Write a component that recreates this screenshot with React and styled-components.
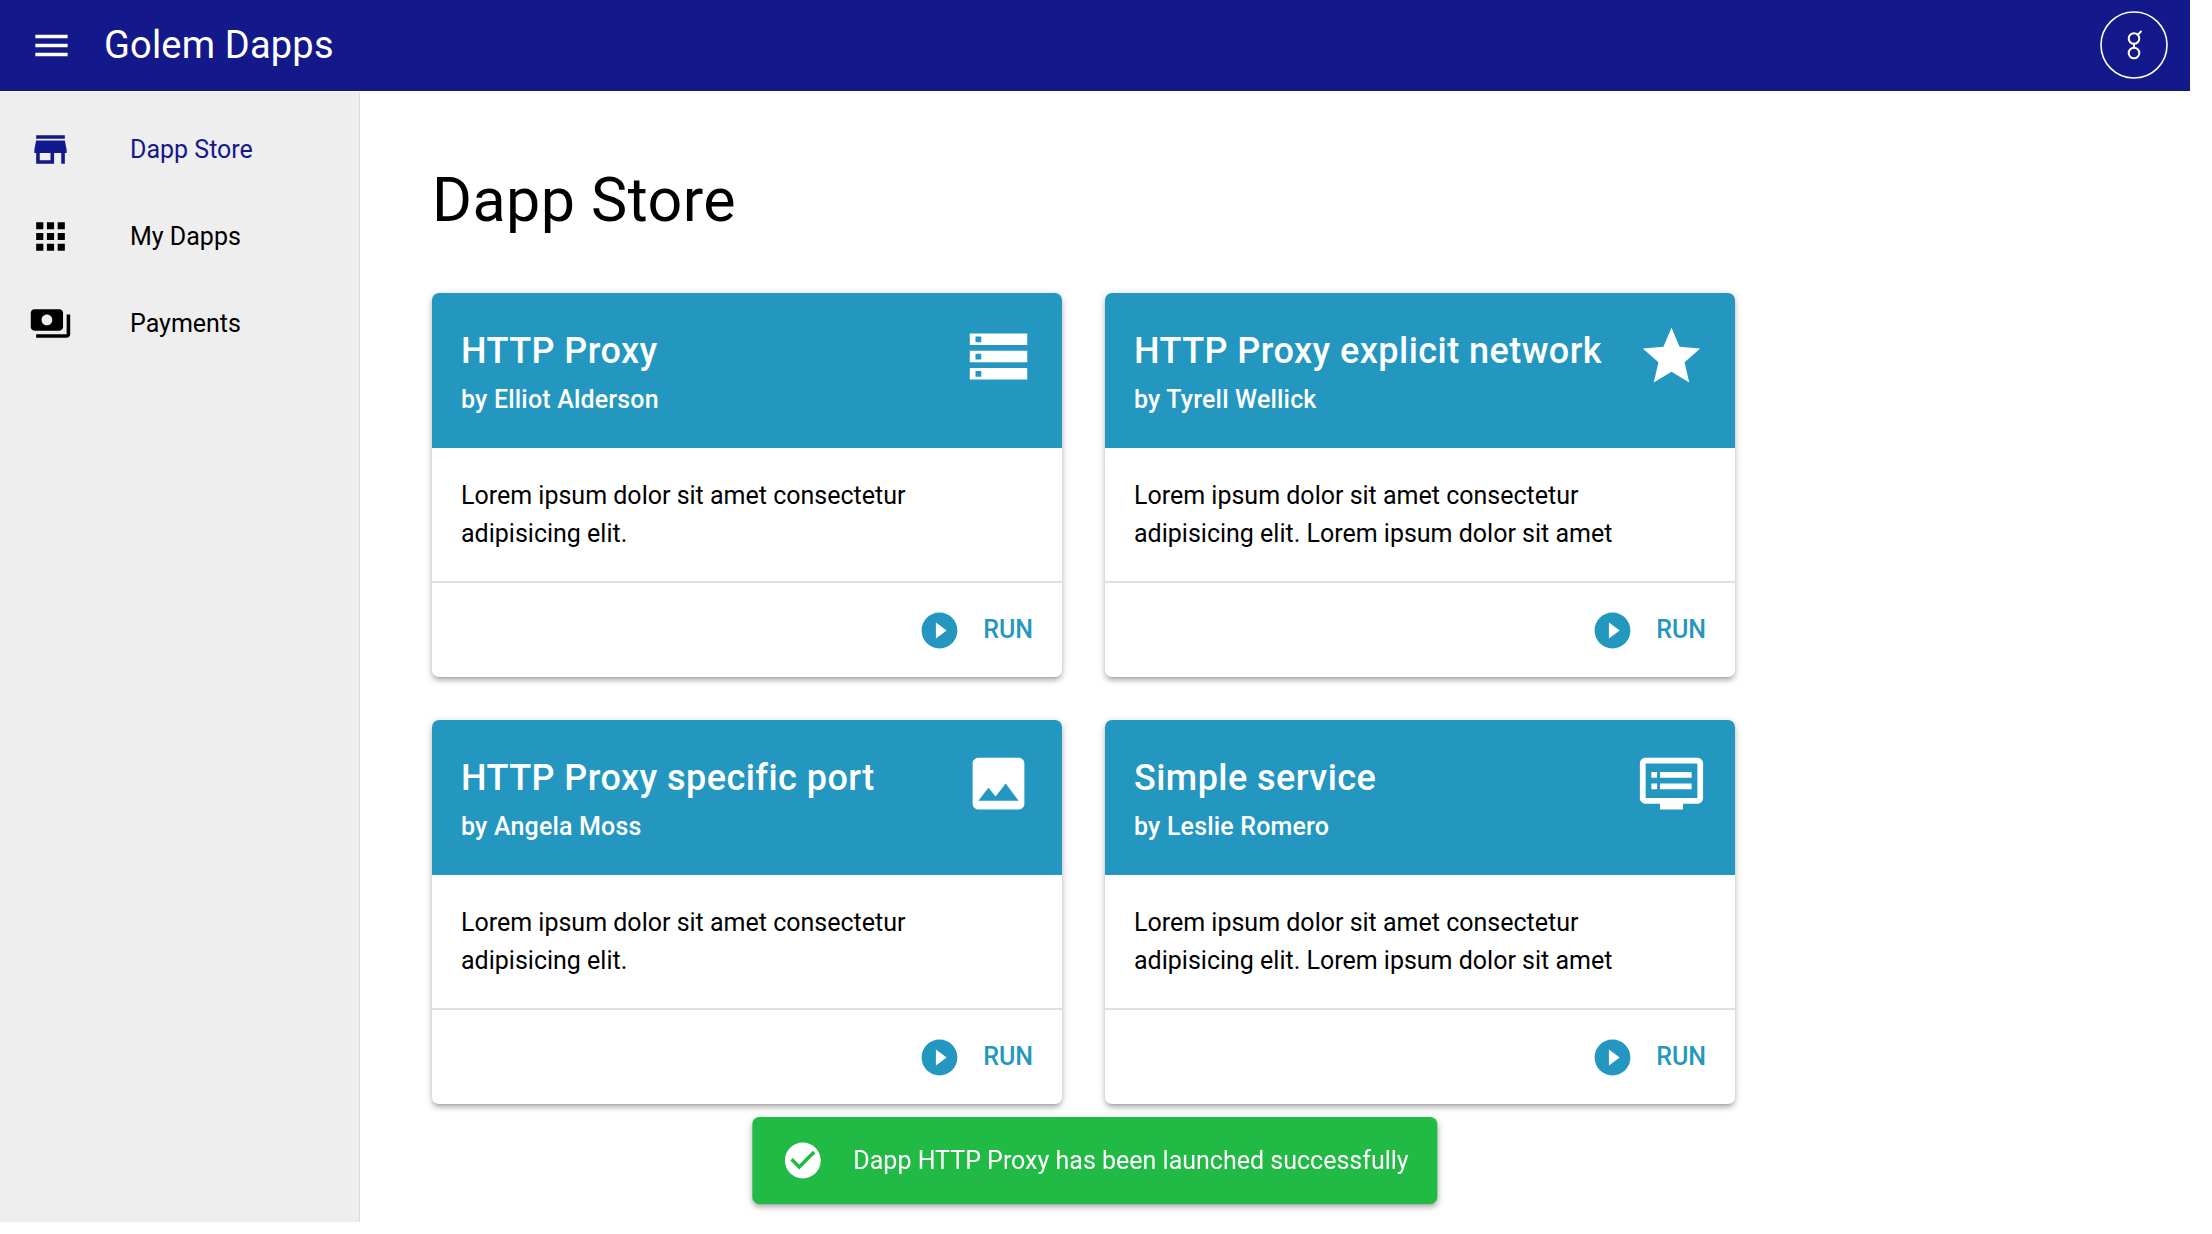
import React, { useState } from "react";
import styled, { createGlobalStyle } from "styled-components";
import {
  MdMenu,
  MdStore,
  MdApps,
  MdPayments,
  MdStorage,
  MdStar,
  MdPhoto,
  MdDvr,
  MdPlayCircleFilled,
  MdCheckCircle,
} from "react-icons/md";

const GlobalStyle = createGlobalStyle`
  *, *::before, *::after { box-sizing: border-box; }
  body {
    margin: 0;
    background: #fff;
    color: #000;
    font-family: Roboto, "Liberation Sans", sans-serif;
    font-size: 25px;
    line-height: 38px;
  }
  h1, h2, p, ul { margin: 0; padding: 0; }
  button { font: inherit; border: 0; background: none; padding: 0; cursor: pointer; }
`;

const Page = styled.div`
  display: flex;
  flex-direction: column;
  min-height: 100vh;
  padding: 0 22px 12px 0;
`;

const Header = styled.header`
  display: flex;
  align-items: center;
  gap: 31px;
  height: 91px;
  padding: 0 22px 0 30px;
  margin-bottom: 1px;
  background: #13188b;
  border-bottom: 1px solid #11157a;
  color: #fff;
`;

const IconButton = styled.button`
  display: flex;
  color: inherit;
  font-size: 43px;
`;

const Brand = styled.div`
  flex: 1;
  font-size: 38px;
  letter-spacing: 0.005em;
`;

const Avatar = styled.button`
  display: flex;
  color: inherit;
`;

const Body = styled.div`
  display: flex;
  flex: 1;
`;

const Sidebar = styled.nav`
  flex: 0 0 360px;
  padding-top: 14px;
  background: #eee;
  border-right: 1px solid #dcdcdc;
`;

const NavList = styled.ul`
  list-style: none;
`;

const NavLink = styled.a`
  display: flex;
  align-items: center;
  gap: 58px;
  height: 87px;
  padding: 0 29px;
  color: ${({ $active }) => ($active ? "#13188b" : "#000")};
  text-decoration: none;

  svg { font-size: 43px; }
`;

const Main = styled.main`
  flex: 1;
  padding: 72px 72px 108px;
`;

const PageTitle = styled.h1`
  margin-bottom: 57px;
  font-size: 61px;
  font-weight: 400;
  line-height: 72px;
  letter-spacing: 0.00735em;
`;

const CardGrid = styled.div`
  display: grid;
  grid-template-columns: repeat(auto-fill, 630px);
  gap: 43px;
`;

const Card = styled.article`
  border-radius: 7px;
  background: #fff;
  overflow: hidden;
  box-shadow:
    0 2px 9px rgba(0, 0, 0, 0.2),
    0 4px 4px rgba(0, 0, 0, 0.14),
    0 5px 2px -4px rgba(0, 0, 0, 0.12);
`;

const CardHeader = styled.div`
  display: flex;
  justify-content: space-between;
  align-items: flex-start;
  padding: 29px;
  background: #2397bf;
  color: #fff;

  svg { font-size: 69px; }
`;

const CardTitle = styled.h2`
  font-size: 36px;
  font-weight: 500;
  line-height: 58px;
  letter-spacing: 0.0125em;
`;

const CardAuthor = styled.p`
  font-weight: 500;
  line-height: 39px;
  letter-spacing: 0.00714em;
`;

const CardText = styled.p`
  min-height: 133px;
  padding: 29px 120px 28px 29px;
`;

const CardActions = styled.div`
  display: flex;
  justify-content: flex-end;
  align-items: center;
  height: 96px;
  padding: 0 29px;
  border-top: 2px solid #e0e0e0;
`;

const RunButton = styled.button`
  display: flex;
  align-items: center;
  gap: 22px;
  color: #2397bf;
  font-weight: 500;
  text-transform: uppercase;

  svg { font-size: 43px; }
`;

const Toast = styled.div`
  position: fixed;
  bottom: 30px;
  left: calc(50% - 11px);
  transform: translateX(-50%);
  display: flex;
  align-items: center;
  gap: 29px;
  height: 87px;
  padding: 0 29px;
  border-radius: 7px;
  background: #21ba45;
  color: #fff;
  white-space: nowrap;
  box-shadow:
    0 2px 9px rgba(0, 0, 0, 0.2),
    0 4px 4px rgba(0, 0, 0, 0.14),
    0 5px 2px -4px rgba(0, 0, 0, 0.12);

  svg { font-size: 43px; }
`;

function GolemMark() {
  return (
    <svg width="68" height="68" viewBox="0 0 68 68" fill="none" stroke="#fff" aria-hidden="true">
      <circle cx="34" cy="34" r="33" strokeWidth="1.6" />
      <g strokeWidth="2">
        <circle cx="34" cy="27.5" r="5.3" />
        <circle cx="34" cy="42" r="5.3" />
        <path d="M34 32.8v3.9M37.8 23.7l3.2-3.2" strokeLinecap="round" />
      </g>
    </svg>
  );
}

const navItems = [
  { label: "Dapp Store", icon: MdStore },
  { label: "My Dapps", icon: MdApps },
  { label: "Payments", icon: MdPayments },
];

const shortText = "Lorem ipsum dolor sit amet consectetur adipisicing elit.";
const longText = shortText + " Lorem ipsum dolor sit amet";

const dapps = [
  { title: "HTTP Proxy", author: "Elliot Alderson", icon: MdStorage, text: shortText },
  { title: "HTTP Proxy explicit network", author: "Tyrell Wellick", icon: MdStar, text: longText },
  { title: "HTTP Proxy specific port", author: "Angela Moss", icon: MdPhoto, text: shortText },
  { title: "Simple service", author: "Leslie Romero", icon: MdDvr, text: longText },
];

function DappCard({ title, author, icon: Icon, text, onRun }) {
  return (
    <Card>
      <CardHeader>
        <div>
          <CardTitle>{title}</CardTitle>
          <CardAuthor>by {author}</CardAuthor>
        </div>
        <Icon />
      </CardHeader>
      <CardText>{text}</CardText>
      <CardActions>
        <RunButton type="button" onClick={onRun}>
          <MdPlayCircleFilled />
          Run
        </RunButton>
      </CardActions>
    </Card>
  );
}

export default function App() {
  const [active, setActive] = useState("Dapp Store");
  const [launched, setLaunched] = useState("HTTP Proxy");

  return (
    <>
      <GlobalStyle />
      <Page>
        <Header>
          <IconButton type="button" aria-label="Menu">
            <MdMenu />
          </IconButton>
          <Brand>Golem Dapps</Brand>
          <Avatar type="button" aria-label="Account">
            <GolemMark />
          </Avatar>
        </Header>
        <Body>
          <Sidebar>
            <NavList>
              {navItems.map(({ label, icon: Icon }) => (
                <li key={label}>
                  <NavLink href="#" $active={label === active} onClick={() => setActive(label)}>
                    <Icon />
                    {label}
                  </NavLink>
                </li>
              ))}
            </NavList>
          </Sidebar>
          <Main>
            <PageTitle>Dapp Store</PageTitle>
            <CardGrid>
              {dapps.map((dapp) => (
                <DappCard key={dapp.title} {...dapp} onRun={() => setLaunched(dapp.title)} />
              ))}
            </CardGrid>
          </Main>
        </Body>
        <Toast role="status">
          <MdCheckCircle />
          Dapp {launched} has been launched successfully
        </Toast>
      </Page>
    </>
  );
}
